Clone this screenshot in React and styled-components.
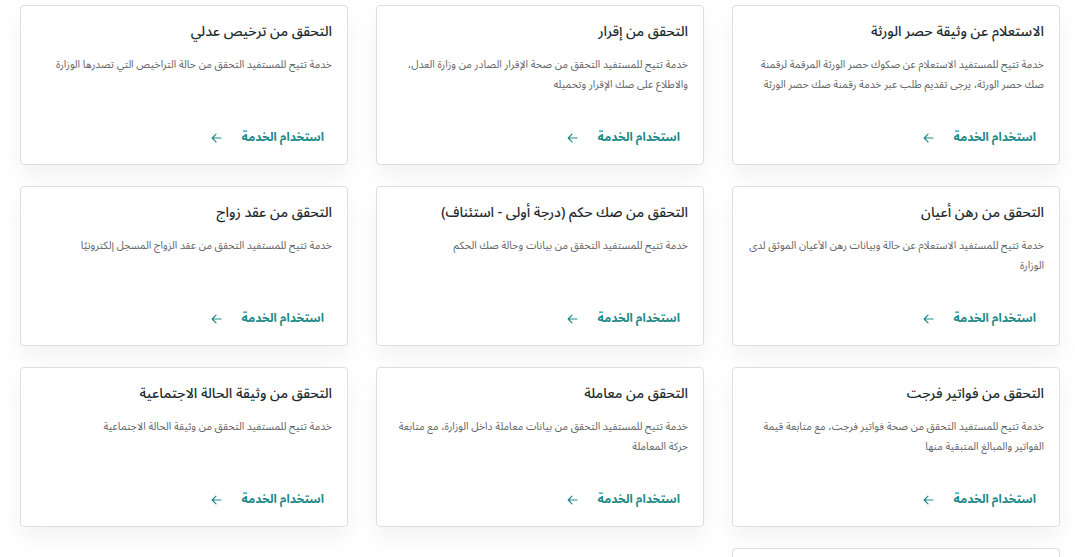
import styled, { createGlobalStyle } from "styled-components";

const GlobalStyle = createGlobalStyle`
  html, body {
    margin: 0;
    padding: 0;
    background: #fff;
  }
  body {
    font-family: "Noto Sans Arabic", "Noto Sans", "DejaVu Sans", sans-serif;
    overflow: hidden;
  }
`;

const services = [
  {
    title: "الاستعلام عن وثيقة حصر الورثة",
    desc: "خدمة تتيح للمستفيد الاستعلام عن صكوك حصر الورثة المرقمة لرقمنة صك حصر الورثة، يرجى تقديم طلب عبر خدمة رقمنة صك حصر الورثة",
  },
  {
    title: "التحقق من إقرار",
    desc: "خدمة تتيح للمستفيد التحقق من صحة الإقرار الصادر من وزارة العدل، والاطلاع على صك الإقرار وتحميله",
  },
  {
    title: "التحقق من ترخيص عدلي",
    desc: "خدمة تتيح للمستفيد التحقق من حالة التراخيص التي تصدرها الوزارة",
  },
  {
    title: "التحقق من رهن أعيان",
    desc: "خدمة تتيح للمستفيد الاستعلام عن حالة وبيانات رهن الأعيان الموثق لدى الوزارة",
  },
  {
    title: "التحقق من صك حكم (درجة أولى - استئناف)",
    desc: "خدمة تتيح للمستفيد التحقق من بيانات وحالة صك الحكم",
  },
  {
    title: "التحقق من عقد زواج",
    desc: "خدمة تتيح للمستفيد التحقق من عقد الزواج المسجل إلكترونيًا",
  },
  {
    title: "التحقق من فواتير فرجت",
    desc: "خدمة تتيح للمستفيد التحقق من صحة فواتير فرجت، مع متابعة قيمة الفواتير والمبالغ المتبقية منها",
  },
  {
    title: "التحقق من معاملة",
    desc: "خدمة تتيح للمستفيد التحقق من بيانات معاملة داخل الوزارة، مع متابعة حركة المعاملة",
  },
  {
    title: "التحقق من وثيقة الحالة الاجتماعية",
    desc: "خدمة تتيح للمستفيد التحقق من وثيقة الحالة الاجتماعية",
  },
  {
    title: "التحقق من وكالة",
    desc: "خدمة تتيح للمستفيد التحقق من صحة الوكالات الصادرة من الوزارة",
  },
];

const ArrowIcon = () => (
  <svg width="11" height="10" viewBox="0 0 11 10" fill="none">
    <path
      d="M10 5H1.5M5 1.2L1.2 5L5 8.8"
      stroke="currentColor"
      strokeWidth="1.2"
      strokeLinecap="round"
      strokeLinejoin="round"
    />
  </svg>
);

export default function App() {
  return (
    <>
      <GlobalStyle />
      <Page>
        <Grid>
          {services.map((s) => (
            <Card key={s.title}>
              <Title>{s.title}</Title>
              <Desc>{s.desc}</Desc>
              <UseLink href="#">
                <span>استخدام الخدمة</span>
                <ArrowIcon />
              </UseLink>
            </Card>
          ))}
        </Grid>
      </Page>
    </>
  );
}

const Page = styled.main`
  direction: rtl;
  padding: 5px 15px 0 20px;
  width: 1040px;
  height: 557px;
  overflow: hidden;
`;

const Grid = styled.div`
  display: grid;
  grid-template-columns: repeat(3, 328px);
  column-gap: 28px;
  row-gap: 21px;
`;

const Card = styled.article`
  height: 160px;
  box-sizing: border-box;
  display: flex;
  flex-direction: column;
  padding: 15px 15px 0 15px;
  background: #fff;
  border: 1px solid #dedede;
  border-radius: 4px;
  box-shadow: 0 12px 22px rgba(0, 0, 0, 0.05);
`;

const Title = styled.h3`
  margin: 0;
  font-size: 14px;
  line-height: 22px;
  font-weight: 500;
  color: #1d2b30;
`;

const Desc = styled.p`
  margin: 12px 0 0;
  font-size: 10.5px;
  line-height: 20px;
  color: #5f6468;
`;

const UseLink = styled.a`
  margin-top: auto;
  margin-bottom: 16px;
  margin-right: 8px;
  display: flex;
  align-items: center;
  gap: 20px;
  align-self: flex-start;
  font-size: 12px;
  line-height: 20px;
  font-weight: 700;
  color: #1e8a88;
  text-decoration: none;
`;
